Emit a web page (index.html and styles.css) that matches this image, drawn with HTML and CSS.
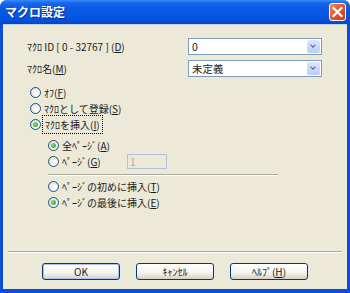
FILE: index.html
```html
<!DOCTYPE html>
<html lang="ja">
<head>
    <meta charset="UTF-8">
    <title>マクロ設定</title>
    <link rel="stylesheet" href="styles.css">
</head>
<body>
    <div class="window">
        <div class="titlebar">
            <span class="title">マクロ設定</span>
            <svg class="close" width="17" height="18" viewBox="0 0 17 18">
                <defs>
                    <linearGradient id="cg" x1="0" y1="0" x2="1" y2="1">
                        <stop offset="0" stop-color="#F08A6A"/>
                        <stop offset="0.5" stop-color="#E0562C"/>
                        <stop offset="1" stop-color="#C33A12"/>
                    </linearGradient>
                </defs>
                <rect x="0.5" y="0.5" width="16" height="17" rx="2.5" fill="url(#cg)" stroke="#FFFFFF"/>
                <path d="M4.5 5 L12.5 13 M12.5 5 L4.5 13" stroke="#FFFFFF" stroke-width="2.2" stroke-linecap="square"/>
            </svg>
        </div>

        <div class="client">
            <div class="fields">
                <label class="lbl">ﾏｸﾛ ID [ 0 - 32767 ] (<u>D</u>)</label>
                <div class="combo"><span>0</span><i class="drop"></i></div>
                <label class="lbl">ﾏｸﾛ名(<u>M</u>)</label>
                <div class="combo"><span>未定義</span><i class="drop"></i></div>
            </div>

            <div class="radios">
                <div class="radio"><i class="dot"></i><span>ｵﾌ(<u>F</u>)</span></div>
                <div class="radio"><i class="dot"></i><span>ﾏｸﾛとして登録(<u>S</u>)</span></div>
                <div class="radio"><i class="dot on"></i><span class="focus">ﾏｸﾛを挿入(<u>I</u>)</span></div>
            </div>

            <div class="radios sub">
                <div class="radio"><i class="dot on"></i><span>全ﾍﾟｰｼﾞ(<u>A</u>)</span></div>
                <div class="radio"><i class="dot"></i><span class="pagelbl">ﾍﾟｰｼﾞ(<u>G</u>)</span><span class="pagebox">1</span></div>
                <hr class="sep">
                <div class="radio"><i class="dot"></i><span>ﾍﾟｰｼﾞの初めに挿入(<u>T</u>)</span></div>
                <div class="radio"><i class="dot on"></i><span>ﾍﾟｰｼﾞの最後に挿入(<u>E</u>)</span></div>
            </div>

            <div class="footer">
                <hr class="line">
                <div class="buttons">
                    <button class="btn default">OK</button>
                    <button class="btn">ｷｬﾝｾﾙ</button>
                    <button class="btn">ﾍﾙﾌﾟ(<u>H</u>)</button>
                </div>
            </div>
        </div>
    </div>
</body>
</html>
```

FILE: styles.css
```css
body { margin: 0; font-family: "Noto Sans CJK JP", "Liberation Sans", sans-serif; font-size: 10px; color: #1a1a1a; }
u { text-decoration: underline; text-underline-offset: 1px; }

.window { width: 350px; height: 293px; display: flex; flex-direction: column; background: #0A4FD6; border-radius: 7px 7px 0 0; overflow: hidden; }
.titlebar { height: 24px; flex: none; display: flex; align-items: center; justify-content: space-between; padding: 0 5px 0 5px;
    background: linear-gradient(#3A8CF8 0, #1767EE 3px, #0A5BE6 8px, #0656E2 16px, #0450D8 21px, #0245C8 24px); }
.title { color: #fff; font-weight: bold; font-size: 12px; text-shadow: 1px 1px 0 #0A2A9A; margin-top: -1px; }
.close { margin-top: -1px; margin-right: -1px; }

.client { flex: 1; margin: 0 3px 4px 3px; background: #ECE9D8; display: flex; flex-direction: column; padding: 13px 0 9px 0; border-top: 1px solid #C4D3F4; }

.fields { display: grid; grid-template-columns: 161px 134px; row-gap: 5px; padding-left: 24px; align-items: center; }
.lbl { line-height: 17px; }
.combo { height: 17px; box-sizing: border-box; border: 1px solid #7F9DB9; background: #fff; display: flex; align-items: center; justify-content: space-between; padding-left: 3px; }
.combo span { line-height: 15px; font-size: 10.5px; }
.drop { width: 13px; height: 13px; margin-right: 1px; border-radius: 2px; background: linear-gradient(#DCE7FD, #B8CDF8); position: relative; }
.drop::after { content: ""; position: absolute; left: 4px; top: 3px; width: 3px; height: 3px; border-right: 1.5px solid #4D6185; border-bottom: 1.5px solid #4D6185; transform: rotate(45deg); }

.radios { display: flex; flex-direction: column; padding-left: 27px; margin-top: 7px; }
.radios.sub { padding-left: 45px; margin-top: 5px; }
.radio { height: 16px; display: flex; align-items: center; gap: 3px; }
.sep + .radio { height: 15px; }
.dot { width: 11px; height: 11px; box-sizing: border-box; border: 1px solid #1C5180; border-radius: 50%; background: radial-gradient(circle at 65% 65%, #FFFFFF 0, #F2F1EC 40%, #D6D3C6 100%); position: relative; flex: none; }
.dot.on::after { content: ""; position: absolute; left: 2px; top: 2px; width: 5px; height: 5px; border-radius: 50%; background: radial-gradient(circle at 35% 35%, #7CE07C, #21A121); }
.focus { outline: 1px dotted #000; outline-offset: 1px; padding: 0 1px; }
.pagelbl { width: 62px; }
.pagebox { width: 40px; height: 15px; box-sizing: border-box; border: 1px solid #B0C2D8; color: #ACA899; line-height: 13px; padding-left: 2px; }
.sep { width: 230px; margin: 5px 0 3px 0; border: 0; border-top: 1px solid #ACA899; border-bottom: 1px solid #fff; height: 0; }

.footer { margin-top: auto; }
.line { margin: 0 5px 0 5px; border: 0; border-top: 1px solid #ACA899; border-bottom: 1px solid #fff; height: 0; }
.buttons { display: flex; gap: 16px; padding-left: 39px; margin-top: 10px; }
.btn { width: 78px; height: 17px; box-sizing: border-box; border: 1px solid #003C74; border-radius: 3px; background: linear-gradient(#FFFFFF, #F4F3EE 60%, #D6D0C5); font: inherit; padding: 0; line-height: 15px; color: #1a1a1a; }
.btn.default { box-shadow: inset 0 0 0 1px #A9C4F0; }
```
